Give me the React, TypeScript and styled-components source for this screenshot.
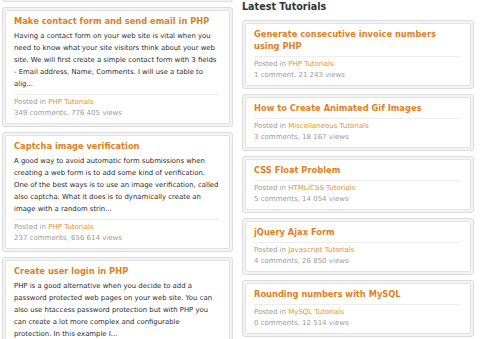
import React from "react"
import styled, { createGlobalStyle } from "styled-components"

const GlobalStyle = createGlobalStyle`
  html, body {
    margin: 0;
    padding: 0;
    background: #ffffff;
    overflow: hidden;
  }
  body {
    font-family: "DejaVu Sans", Verdana, sans-serif;
  }
`

const Page = styled.div`
  display: flex;
  align-items: flex-start;
  gap: 9px;
  padding-left: 2px;
  width: 480px;
  height: 339px;
  overflow: hidden;
`

const LeftColumn = styled.div`
  width: 231px;
  display: flex;
  flex-direction: column;
  gap: 5px;
  margin-top: -118px;
`

const RightColumn = styled.div`
  width: 232px;
  display: flex;
  flex-direction: column;
  gap: 5px;
`

const Heading = styled.h2`
  margin: 0 0 1px;
  font-size: 9.6px;
  line-height: 14px;
  font-weight: bold;
  color: #333;
`

const Card = styled.div`
  border: 1px solid #dcdcdc;
  border-radius: 3px;
  background: #f3f3f3;
  padding: 2px;
`

const CardInner = styled.div`
  background: #fff;
  border: 1px solid #e2e2e2;
  border-radius: 2px;
  padding: 4px 10px 4px 8px;
`

const Title = styled.a`
  display: block;
  font-size: 8.3px;
  line-height: 12px;
  font-weight: bold;
  color: #e07f1e;
  text-decoration: none;
`

const Body = styled.p`
  margin: 3px 0 4px;
  font-size: 6.9px;
  line-height: 12px;
  color: #2b2b2b;
`

const Meta = styled.div<{ $tight?: boolean }>`
  border-top: 1px solid #eeeeee;
  margin: ${(p) => (p.$tight ? "4px" : "0")} 0 0 0;
  padding-top: 2px;
  font-size: 7px;
  line-height: 11px;
  color: #9a9a9a;
  a {
    color: #e39234;
    text-decoration: none;
  }
`

interface Post {
  title: string
  text?: string
  category: string
  comments: number
  views: string
}

const leftPosts: Post[] = [
  {
    title: "Send e-mail with attachment in PHP",
    text: "Sending e-mails with attachments is a common task when you build a web site. In this tutorial we will show you how to send a message with a file attached using PHP. The mail function can be used together with MIME headers to build a multi...",
    category: "PHP Tutorials",
    comments: 120,
    views: "301 002",
  },
  {
    title: "Make contact form and send email in PHP",
    text: "Having a contact form on your web site is vital when you need to know what your site visitors think about your web site. We will first create a simple contact form with 3 fields - Email address, Name, Comments. I will use a table to alig...",
    category: "PHP Tutorials",
    comments: 349,
    views: "776 405",
  },
  {
    title: "Captcha image verification",
    text: "A good way to avoid automatic form submissions when creating a web form is to add some kind of verification. One of the best ways is to use an image verification, called also captcha. What it does is to dynamically create an image with a random strin...",
    category: "PHP Tutorials",
    comments: 237,
    views: "656 614",
  },
  {
    title: "Create user login in PHP",
    text: "PHP is a good alternative when you decide to add a password protected web pages on your web site. You can also use htaccess password protection but with PHP you can create a lot more complex and configurable protection. In this example I...",
    category: "PHP Tutorials",
    comments: 198,
    views: "512 330",
  },
]

const latest: Post[] = [
  { title: "Generate consecutive invoice numbers using PHP", category: "PHP Tutorials", comments: 1, views: "21 243" },
  { title: "How to Create Animated Gif Images", category: "Miscellaneous Tutorials", comments: 3, views: "18 167" },
  { title: "CSS Float Problem", category: "HTML/CSS Tutorials", comments: 5, views: "14 054" },
  { title: "jQuery Ajax Form", category: "Javascript Tutorials", comments: 4, views: "26 850" },
  { title: "Rounding numbers with MySQL", category: "MySQL Tutorials", comments: 0, views: "12 514" },
]

const PostCard = ({ post }: { post: Post }) => (
  <Card>
    <CardInner>
      <Title href="#">{post.title}</Title>
      {post.text && <Body>{post.text}</Body>}
      <Meta $tight={!post.text}>
        <div>
          Posted in <a href="#">{post.category}</a>
        </div>
        <div>
          {post.comments} {post.comments === 1 ? "comment" : "comments"}, {post.views} views
        </div>
      </Meta>
    </CardInner>
  </Card>
)

const App = () => {
  return (
    <>
      <GlobalStyle />
      <Page>
        <LeftColumn>
          {leftPosts.map((p) => (
            <PostCard key={p.title} post={p} />
          ))}
        </LeftColumn>
        <RightColumn>
          <Heading>Latest Tutorials</Heading>
          {latest.map((p) => (
            <PostCard key={p.title} post={p} />
          ))}
        </RightColumn>
      </Page>
    </>
  )
}

export default App
